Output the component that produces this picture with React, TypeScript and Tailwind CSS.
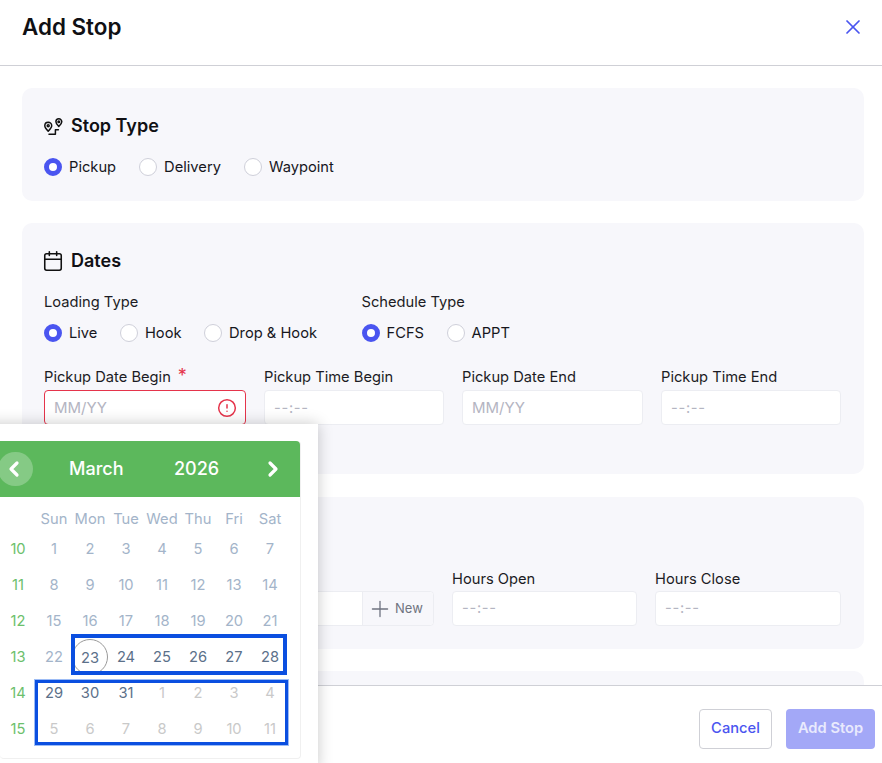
import React from "react";
import { X, Calendar, CircleAlert, Plus, ChevronLeft, ChevronRight } from "lucide-react";

function Radio({ label, checked }: { label: string; checked?: boolean }) {
  return (
    <div className="flex items-center gap-[7px]">
      {checked ? (
        <span className="w-[18px] h-[18px] rounded-full border-[5px] border-[#4a55f0] bg-white" />
      ) : (
        <span className="w-[18px] h-[18px] rounded-full border border-[#cfd0da] bg-white" />
      )}
      <span className="text-[14.7px] leading-[18px] text-[#16161d]">{label}</span>
    </div>
  );
}

function Field({ label, placeholder, error, required }: { label: string; placeholder: string; error?: boolean; required?: boolean }) {
  const isTime = placeholder === "--:--";
  return (
    <div className="flex flex-col">
      <div className="h-[22px] flex items-start text-[14.7px] leading-[18px] text-[#1c1c24]">
        {label}
        {required && <span className="ml-[7px] mt-[1px] text-[#e5344b] text-[18px] leading-[14px]">*</span>}
      </div>
      <div className={`h-[35px] rounded-[4px] bg-white border flex items-center justify-between pl-[9px] pr-[8px] ${error ? "border-[#e5344b]" : "border-[#ecedf2]"} text-[#b4b5c2]`}>
        <span className={isTime ? "pt-[1px] text-[14.7px] tracking-[0.7px]" : "pt-[1px] text-[15px]"}>{placeholder}</span>
        {error && <CircleAlert size={20} className="text-[#e5344b]" strokeWidth={1.8} />}
      </div>
    </div>
  );
}

function RouteIcon() {
  return (
    <svg width="20" height="20" viewBox="0 0 20 20" fill="none" stroke="#111" strokeWidth="1.5" strokeLinecap="round" strokeLinejoin="round">
      <path d="M4.2 15.2C2 13 .8 11.6.8 9.8A3.5 3.5 0 0 1 4.2 6.3a3.5 3.5 0 0 1 3.5 3.5c0 1.8-1.3 3.2-3.5 5.4Z" />
      <circle cx="4.2" cy="9.8" r="1" />
      <path d="M14.8 10.5c-1.7-1.7-2.9-3-2.9-4.7a2.95 2.95 0 0 1 5.9 0c0 1.7-1.2 3-3 4.7Z" />
      <circle cx="14.8" cy="5.8" r="0.8" />
      <path d="M5 18.2h6.4v-4.4h3" />
    </svg>
  );
}

const weeks: [number, number[]][] = [
  [10, [1, 2, 3, 4, 5, 6, 7]],
  [11, [8, 9, 10, 11, 12, 13, 14]],
  [12, [15, 16, 17, 18, 19, 20, 21]],
  [13, [22, 23, 24, 25, 26, 27, 28]],
  [14, [29, 30, 31, 1, 2, 3, 4]],
  [15, [5, 6, 7, 8, 9, 10, 11]],
];

function dayColor(wi: number, di: number) {
  if (wi < 3 || (wi === 3 && di === 0)) return "text-[#a3b4c9]";
  if (wi === 3 || (wi === 4 && di < 3)) return "text-[#5b7089]";
  return "text-[#c9c9c9]";
}

function CalendarPopup() {
  return (
    <div className="absolute left-[-18px] top-[424px] w-[336px] h-[345px] bg-white pl-[18px] pt-[17px] shadow-[0_0_14px_rgba(0,0,0,0.22)]">
      <div className="w-[301px] h-[318px] border-r border-b border-[#f0f0f0] rounded-[4px]">
        <div className="relative h-[56px] bg-[#5cb85c] rounded-tr-[4px] text-white text-[18px] font-medium">
          <span className="absolute left-[-2px] top-[11px] w-[35px] h-[34px] rounded-full bg-white/25 flex items-center justify-center pr-[4px]">
            <ChevronLeft size={24} strokeWidth={3.2} />
          </span>
          <span className="absolute left-[69px] top-[17px] leading-[22px]">March</span>
          <span className="absolute left-[174px] top-[17px] leading-[22px]">2026</span>
          <span className="absolute left-[261px] top-[16px]">
            <ChevronRight size={24} strokeWidth={3.2} />
          </span>
        </div>
        <div className="grid grid-cols-[repeat(8,36px)] pt-[12px] text-[14.7px]">
          <span className="h-[22px]" />
          {["Sun", "Mon", "Tue", "Wed", "Thu", "Fri", "Sat"].map((d) => (
            <span key={d} className="h-[22px] leading-[20px] text-center text-[#a3b4c9]">{d}</span>
          ))}
        </div>
        <div className="grid grid-cols-[repeat(8,36px)] auto-rows-[36px] text-[14.7px]">
          {weeks.map(([w, days], wi) => (
            <React.Fragment key={w}>
              <span className="flex items-center justify-center text-[#6cc06c]">{w}</span>
              {days.map((d, di) => (
                <span key={di} className={`flex items-center justify-center ${dayColor(wi, di)}`}>
                  {wi === 3 && di === 1 ? (
                    <span className="w-[36px] h-[36px] rounded-full border border-[#9a9a9a] flex items-center justify-center pt-[2px] shrink-0">{d}</span>
                  ) : (
                    d
                  )}
                </span>
              ))}
            </React.Fragment>
          ))}
        </div>
      </div>
    </div>
  );
}

export default function App() {
  return (
    <div className="relative h-[763px] w-[882px] overflow-hidden bg-white flex flex-col font-['Inter',sans-serif]">
      <header className="h-[66px] shrink-0 border-b border-[#cfd0d6] flex items-start justify-between pl-[22px] pr-[17px]">
        <h1 className="pt-[13px] text-[22.4px] leading-[28px] font-semibold text-[#101014]">Add Stop</h1>
        <X size={24} strokeWidth={1.7} className="mt-[15px] text-[#4a55f0]" />
      </header>

      <main className="flex-1 min-h-0 overflow-hidden pt-[22px] pl-[22px] pr-[18px] flex flex-col gap-[22.5px]">
        <section className="h-[112.5px] shrink-0 rounded-[10px] bg-[#f7f7fb] pt-[27px] pl-[22px]">
          <div className="flex items-center gap-[7px] h-[22px]">
            <RouteIcon />
            <h2 className="text-[18px] leading-[22px] font-semibold text-[#101014]">Stop Type</h2>
          </div>
          <div className="flex mt-[21px] gap-[23px]">
            <Radio label="Pickup" checked />
            <Radio label="Delivery" />
            <Radio label="Waypoint" />
          </div>
        </section>

        <section className="h-[251px] shrink-0 rounded-[10px] bg-[#f7f7fb] pt-[27px] pl-[22px]">
          <div className="flex items-center gap-[7px] h-[22px]">
            <Calendar size={22} strokeWidth={1.7} className="text-[#111] -ml-[2px]" />
            <h2 className="text-[18px] leading-[22px] font-semibold text-[#101014]">Dates</h2>
          </div>
          <div className="flex mt-[22px]">
            <div className="w-[317.5px]">
              <div className="text-[14.7px] leading-[17px] text-[#1c1c24]">Loading Type</div>
              <div className="flex mt-[13px] gap-[22.5px]">
                <Radio label="Live" checked />
                <Radio label="Hook" />
                <Radio label="Drop &amp; Hook" />
              </div>
            </div>
            <div>
              <div className="text-[14.7px] leading-[17px] text-[#1c1c24]">Schedule Type</div>
              <div className="flex mt-[13px] gap-[22.5px]">
                <Radio label="FCFS" checked />
                <Radio label="APPT" />
              </div>
            </div>
          </div>
          <div className="grid grid-cols-[202px_180px_181px_180px] gap-[18px] mt-[26px]">
            <Field label="Pickup Date Begin" placeholder="MM/YY" error required />
            <Field label="Pickup Time Begin" placeholder="--:--" />
            <Field label="Pickup Date End" placeholder="MM/YY" />
            <Field label="Pickup Time End" placeholder="--:--" />
          </div>
        </section>

        <section className="h-[152px] shrink-0 rounded-[10px] bg-[#f7f7fb] pt-[73.5px] pl-[22px]">
          <div className="grid grid-cols-[390px_185px_186px] gap-[18px]">
            <div className="flex flex-col">
              <div className="h-[21px]" />
              <div className="h-[35px] flex rounded-[4px] bg-white border border-[#ecedf2]">
                <span className="flex-1" />
                <span className="w-[71px] bg-[#f7f7fb] border-l border-[#ecedf2] rounded-r-[4px] flex items-center pl-[4px] gap-[2px] text-[13px] text-[#6f7380]">
                  <Plus size={26} strokeWidth={1.2} className="text-[#6f7380]" />
                  New
                </span>
              </div>
            </div>
            <div className="flex flex-col">
              <div className="h-[21px] text-[14.7px] leading-[18px] text-[#1c1c24]">Hours Open</div>
              <div className="h-[35px] rounded-[4px] bg-white border border-[#ecedf2] flex items-center pl-[9px] text-[14.7px] tracking-[0.7px] text-[#b4b5c2]">--:--</div>
            </div>
            <div className="flex flex-col">
              <div className="h-[21px] text-[14.7px] leading-[18px] text-[#1c1c24]">Hours Close</div>
              <div className="h-[35px] rounded-[4px] bg-white border border-[#ecedf2] flex items-center pl-[9px] text-[14.7px] tracking-[0.7px] text-[#b4b5c2]">--:--</div>
            </div>
          </div>
        </section>

        <section className="h-[100px] shrink-0 rounded-[10px] bg-[#f7f7fb]" />
      </main>

      <footer className="h-[78px] shrink-0 border-t border-[#cfd0d6] bg-white flex items-start justify-end gap-[14px] pt-[23px] pr-[7px]">
        <button className="w-[73px] h-[40px] pb-[1px] rounded-[4px] border border-[#cfd0d6] bg-white text-[14.7px] font-medium text-[#4a55f0]">Cancel</button>
        <button className="w-[89px] h-[40px] pb-[1px] rounded-[4px] bg-[#a3a8f7] text-[14.7px] font-semibold text-[#e9eafd]">Add Stop</button>
      </footer>

      <CalendarPopup />
      <div className="absolute left-[71px] top-[634px] w-[216px] h-[41px] border-[4px] border-[#0b4fe0]" />
      <div className="absolute left-[35px] top-[680px] w-[253px] h-[65px] border-[3px] border-[#0b4fe0] outline outline-[1px] outline-[#9dbcf5]" />
    </div>
  );
}
